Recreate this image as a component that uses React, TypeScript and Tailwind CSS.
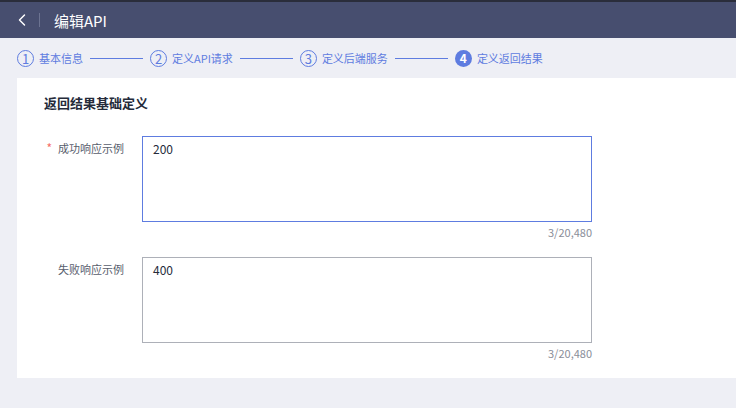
import { ChevronLeft } from 'lucide-react';

const steps = [
  { n: 1, label: '基本信息' },
  { n: 2, label: '定义API请求' },
  { n: 3, label: '定义后端服务' },
  { n: 4, label: '定义返回结果', active: true },
];

const fields = [
  { label: '成功响应示例', value: '200', required: true, focused: true },
  { label: '失败响应示例', value: '400', required: false, focused: false },
];

export default function App() {
  return (
    <div
      className="w-[736px] h-[408px] bg-[#eeeff5] overflow-hidden"
      style={{ fontFamily: '"Noto Sans CJK SC", "Noto Sans", sans-serif' }}
    >
      {/* Header */}
      <div className="h-[2px] bg-[#2a2d3b]" />
      <div className="h-[36px] bg-[#474e6f] flex items-center pl-[12px]">
        <ChevronLeft className="w-[20px] h-[20px] text-white" strokeWidth={1.75} />
        <div className="w-px h-[14px] bg-[#6c7391] ml-[7px] mr-[14px]" />
        <span className="text-white text-[15px] leading-none">编辑API</span>
      </div>

      {/* Steps */}
      <div className="h-[40px] flex items-center pl-[17px] text-[11px] text-[#5e7ce0]">
        {steps.map((s, i) => (
          <div key={s.n} className="flex items-center">
            {s.active ? (
              <span className="w-[17px] h-[17px] rounded-full bg-[#5e7ce0] text-white flex items-center justify-center text-[12px] font-bold leading-none">
                {s.n}
              </span>
            ) : (
              <span className="w-[17px] h-[17px] rounded-full border border-[#5e7ce0] flex items-center justify-center text-[13px] leading-none">
                {s.n}
              </span>
            )}
            <span className="ml-[5px] leading-none">{s.label}</span>
            {i < steps.length - 1 && <div className="w-[53px] h-px bg-[#5e7ce0] mx-[7px]" />}
          </div>
        ))}
      </div>

      {/* Panel */}
      <div className="ml-[17px] bg-white h-[300px] pt-[15px] pl-[27px]">
        <div className="text-[13px] font-bold text-[#252b3a] leading-[20px]">返回结果基础定义</div>
        <div className="mt-[23px] flex flex-col gap-[16px]">
          {fields.map((f) => (
            <div key={f.label} className="flex">
              <div className="w-[98px] pr-[18px] pt-[5px] text-right text-[11px] text-[#575d6c] leading-[14px] whitespace-nowrap">
                {f.required && <span className="text-[#f66f6a] mr-[6px] text-[12px]">*</span>}
                {f.label}
              </div>
              <div className="w-[450px]">
                <div
                  className={`h-[86px] border px-[10px] pt-[4px] text-[12px] text-[#252b3a] leading-[16px] ${
                    f.focused ? 'border-[#5e7ce0]' : 'border-[#adb0b8]'
                  }`}
                >
                  {f.value}
                </div>
                <div className="text-right text-[11px] text-[#8a8e99] leading-[18px] mt-[1px]">3/20,480</div>
              </div>
            </div>
          ))}
        </div>
      </div>
    </div>
  );
}
